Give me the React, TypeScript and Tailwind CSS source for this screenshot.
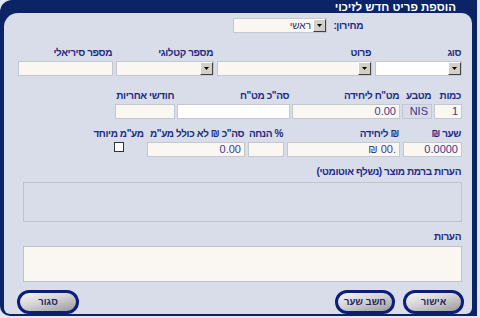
import React from "react";

function Arrow() {
  return (
    <div className="flex h-[13px] w-[13px] shrink-0 items-center justify-center border border-t-white border-l-white border-r-[#404040] border-b-[#404040] bg-[#d4d0c8]">
      <svg width="5" height="3" viewBox="0 0 5 3">
        <path d="M0 0H5L2.5 3Z" fill="#000" />
      </svg>
    </div>
  );
}

function Select({ className, text, white }: { className: string; text?: string; white?: boolean }) {
  return (
    <div
      className={`flex h-[15px] items-center border border-[#c3c7cf] ${white ? "bg-white" : "bg-[#faf6f1]"} ${className}`}
    >
      <Arrow />
      {text ? <span className="pr-[2px] text-[10px] leading-[13px] text-[#333366]">{text}</span> : null}
    </div>
  );
}

function Field({ className, children }: { className: string; children?: React.ReactNode }) {
  return (
    <div className={`flex h-[15px] items-center border border-[#c3c7cf] pr-[3px] text-[11px] leading-[13px] text-[#3a3a8c] ${className}`}>
      {children}
    </div>
  );
}

function Label({ children }: { children: React.ReactNode }) {
  return <div className="whitespace-nowrap pr-[1px] text-[10px] font-bold leading-[13px] tracking-[-0.4px] text-[#1e2b86]">{children}</div>;
}

function Btn({ className, children }: { className: string; children: React.ReactNode }) {
  return (
    <div
      className={`flex h-[24px] items-center justify-center rounded-full border-[3px] border-[#0c1d7c] bg-[linear-gradient(165deg,#f6f6f6_0%,#d4d4d4_45%,#9a9a9a_100%)] text-[9.5px] font-bold leading-[12px] text-[#25255e] ${className}`}
    >
      {children}
    </div>
  );
}

export default function App() {
  return (
    <div className="flex h-[318px] w-[480px] items-start bg-[#e4e8f0] font-['Liberation_Sans','DejaVu_Sans',sans-serif]">
      <div className="flex h-[316px] w-[477px] flex-col rounded-tl-[12px] rounded-bl-[10px] bg-[#0b2466] pb-[4px] pl-[4px] pr-[5px]">
        <div dir="rtl" className="h-[13px] pr-[16px] text-[11.5px] font-bold leading-[14px] text-white">
          הוספת פריט חדש לזיכוי
        </div>
        <div dir="rtl" className="flex flex-1 flex-col rounded-tl-[14px] rounded-tr-[10px] rounded-b-[6px] bg-[#d8dde9] pr-[10px]">
          {/* row 1 */}
          <div className="mr-[98px] mt-[5px] flex items-center">
            <div className="w-[37px]">
              <Label>מחירון:</Label>
            </div>
            <Select className="w-[94px]" text="ראשי" />
          </div>

          {/* row 2 */}
          <div className="mt-[13px] flex gap-[3px]">
            <div className="flex flex-col gap-[2px]">
              <Label>סוג</Label>
              <Select className="w-[87px]" white />
            </div>
            <div className="flex flex-col gap-[2px]">
              <Label>פרוט</Label>
              <Select className="w-[155px]" />
            </div>
            <div className="flex flex-col gap-[2px]">
              <Label>מספר קטלוגי</Label>
              <Select className="w-[98px]" />
            </div>
            <div className="flex flex-col gap-[2px]">
              <Label>מספר סיריאלי</Label>
              <Field className="w-[95px] bg-[#faf6f1]" />
            </div>
          </div>

          {/* row 3 */}
          <div className="mt-[13px] flex gap-[2px]">
            <div className="flex flex-col gap-[2px]">
              <Label>כמות</Label>
              <Field className="w-[28px] bg-[#faf6f1]">1</Field>
            </div>
            <div className="flex flex-col gap-[2px]">
              <Label>מטבע</Label>
              <Field className="w-[30px] bg-[#d8dde9]">NIS</Field>
            </div>
            <div className="flex flex-col gap-[2px]">
              <Label>מט"ח ליחידה</Label>
              <Field className="w-[108px] bg-[#faf6f1]">0.00</Field>
            </div>
            <div className="flex flex-col gap-[2px]">
              <Label>סה"כ מט"ח</Label>
              <Field className="w-[113px] bg-white" />
            </div>
            <div className="flex flex-col gap-[2px]">
              <Label>חודשי אחריות</Label>
              <Field className="w-[60px] bg-[#faf6f1]" />
            </div>
          </div>

          {/* row 4 */}
          <div className="mt-[8px] flex gap-[3px]">
            <div className="flex flex-col gap-[2px]">
              <Label>שער ₪</Label>
              <Field className="w-[59px] bg-[#faf6f1]">0.0000</Field>
            </div>
            <div className="flex flex-col gap-[2px]">
              <Label>₪ ליחידה</Label>
              <Field className="w-[113px] bg-[#faf6f1]">
                <span dir="ltr">₪ 00.</span>
              </Field>
            </div>
            <div className="flex flex-col gap-[2px]">
              <Label>% הנחה</Label>
              <Field className="w-[36px] bg-[#faf6f1]" />
            </div>
            <div className="flex flex-col gap-[2px]">
              <Label>סה"כ ₪ לא כולל מע"מ</Label>
              <Field className="w-[98px] bg-[#faf6f1]">0.00</Field>
            </div>
            <div className="flex w-[50px] flex-col items-center gap-[2px]">
              <Label>מע"מ מיוחד</Label>
              <div className="h-[10px] w-[10px] border border-[#333] bg-white" />
            </div>
          </div>

          {/* notes auto */}
          <div className="mt-[8px]">
            <Label>הערות ברמת מוצר (נשלף אוטומטי)</Label>
          </div>
          <div className="ml-[19px] mt-[4px] h-[40px] border border-[#c0c4cc] bg-[#d8dde9]" />

          {/* notes */}
          <div className="mt-[8px]">
            <Label>הערות</Label>
          </div>
          <div className="ml-[19px] mt-[3px] h-[36px] border border-[#c0c4cc] bg-[#faf6f1]" />

          {/* buttons */}
          <div className="-mr-[2px] mt-[8px] flex gap-[8px]">
            <Btn className="w-[61px]">אישור</Btn>
            <Btn className="w-[60px]">חשב שער</Btn>
            <Btn className="ml-[13px] mr-auto w-[62px]">סגור</Btn>
          </div>
        </div>
      </div>
    </div>
  );
}
